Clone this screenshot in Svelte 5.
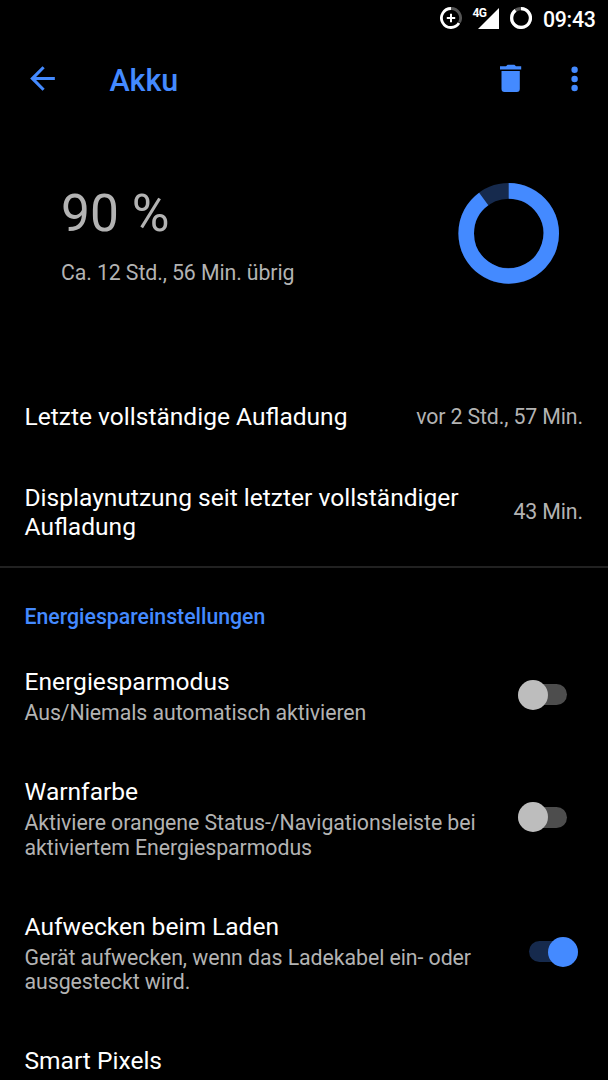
<script>
  const settings = [
    { title: 'Energiesparmodus', lines: ['Aus/Niemals automatisch aktivieren'], on: false },
    { title: 'Warnfarbe', lines: ['Aktiviere orangene Status-/Navigationsleiste bei', 'aktiviertem Energiesparmodus'], on: false },
    { title: 'Aufwecken beim Laden', lines: ['Gerät aufwecken, wenn das Ladekabel ein- oder', 'ausgesteckt wird.'], on: true }
  ];
</script>

<main>
  <div class="status">
    <svg width="22" height="22" viewBox="0 0 22 22" fill="none" stroke="#fff" stroke-width="2.8">
      <path d="M11 1.500A9.500 9.500 0 0 1 19.500 15.300" stroke="#555" />
      <path d="M11 1.500A9.500 9.500 0 1 0 19 16.100" />
      <path d="M11 6.800v8.400M6.800 11h8.400" stroke-width="2" />
    </svg>
    <svg class="signal" width="28" height="30" viewBox="0 -4 28 30">
      <path d="M27 1v21H6z" fill="#fff" />
      <text x="0.5" y="9.700" class="net">4G</text>
    </svg>
    <svg class="ring" width="22" height="22" viewBox="0 0 22 22" fill="none" stroke="#fff" stroke-width="3.2">
      <circle cx="11" cy="11" r="9.400" stroke="#555" /><path d="M11 1.600A9.400 9.400 0 1 1 5.500 3.400" />
    </svg>
    <time>09:43</time>
  </div>
  <header>
    <svg class="back" width="37" height="37" viewBox="0 0 24 24" fill="#448aff"><path d="M20 11H7.830l5.590-5.590L12 4l-8 8 8 8 1.410-1.410L7.830 13H20z" /></svg>
    <h1>Akku</h1>
    <svg class="trash" width="22" height="28" viewBox="0 0 22 28" fill="#448aff"><path d="M0 2.300h6L7.600.700h6.800L16 2.300h5.200v3.300H0zM1.500 7h18.300v18a3 3 0 0 1-3 3H4.500a3 3 0 0 1-3-3z" /></svg>
    <svg class="more" width="8" height="26" viewBox="0 0 8 26" fill="#448aff"><circle cx="3.600" cy="3.800" r="3.200" /><circle cx="3.600" cy="13" r="3.200" /><circle cx="3.600" cy="22" r="3.200" /></svg>
  </header>
  <section class="hero">
    <div><div class="percent">90 %</div><div class="remaining">Ca. 12 Std., 56 Min. übrig</div></div>
    <svg width="102" height="102" viewBox="0 0 102 102" fill="none" stroke-width="15.6">
      <circle cx="50.700" cy="51.400" r="42.500" stroke="#162a4d" /><path d="M50.700 8.900A42.500 42.500 0 1 1 25.720 17.020" stroke="#448aff" />
    </svg>
  </section>
  <section class="row charge"><span>Letzte vollständige Aufladung</span><small>vor 2 Std., 57 Min.</small></section>
  <section class="row usage"><span>Displaynutzung seit letzter vollständiger<br />Aufladung</span><small>43 Min.</small></section>
  <h2>Energiespareinstellungen</h2>
  {#each settings as s}
    <section class="setting">
      <div><h3>{s.title}</h3>{#each s.lines as line}<p>{line}</p>{/each}</div>
      <span class="switch" class:on={s.on}><i></i></span>
    </section>
  {/each}
  <h3 class="last">Smart Pixels</h3>
</main>

<style>
  :global(body) { background: #000; overflow: hidden; }
  main { width: 608px; height: 1080px; overflow: hidden; background: #000; color: #fff; font-family: Roboto, sans-serif; box-sizing: border-box; }
  h1, h2, h3, p { margin: 0; font-weight: 400; }
  svg { display: block; flex: none; }
  .status { height: 36px; display: flex; align-items: center; justify-content: flex-end; padding-right: 12px; }
  .signal { margin-left: 10px; }
  .ring { margin-left: 10px; }
  .net { font: 700 12px Roboto, sans-serif; letter-spacing: -.7px; fill: #fff; stroke: #000; stroke-width: 2px; paint-order: stroke; }
  time { width: 53px; font-size: 21.300px; line-height: 25px; font-weight: 500; margin: 2px 0 0 11px; letter-spacing: -.3px; white-space: nowrap; }
  header { height: 86px; display: flex; align-items: center; padding: 0 29px 0 23.500px; box-sizing: border-box; }
  .back { margin-top: -1px; }
  h1 { font-size: 30.500px; font-weight: 500; color: #448aff; margin: 2px 0 0 49px; flex: 1; letter-spacing: -.1px; }
  .trash { margin-top: -2px; }
  .more { margin-left: 49px; }
  .hero { height: 253px; display: flex; justify-content: space-between; padding: 60px 48px 0 61px; box-sizing: border-box; color: #b3b3b3; }
  .percent { font-size: 51.500px; line-height: 61px; padding-top: 1px; }
  .remaining { font-size: 21.300px; letter-spacing: -.1px; line-height: 25px; margin-top: 16px; }
  .row { display: flex; align-items: center; justify-content: space-between; padding: 0 25px 0 24.500px; box-sizing: border-box; font-size: 24.560px; line-height: 29px; }
  .row small { font-size: 21.300px; letter-spacing: -.12px; color: #b3b3b3; }
  .charge { height: 82px; }
  .usage { height: 111px; border-bottom: 2px solid #212121; }
  h2 { font-size: 21.250px; font-weight: 500; line-height: 25px; color: #448aff; padding: 36px 24.500px 0; }
  .setting { display: flex; align-items: center; justify-content: space-between; padding: 38px 25px 13.500px 24.500px; }
  h3 { font-size: 24.560px; line-height: 29px; }
  .setting h3 { margin-bottom: 5px; }
  p { font-size: 21.300px; letter-spacing: -.06px; line-height: 24.500px; color: #b3b3b3; }
  .switch { width: 49px; height: 21px; border-radius: 11px; background: #4d4d4d; margin: 0 16px 3px 0; position: relative; }
  .switch i { position: absolute; width: 30px; height: 30px; border-radius: 50%; background: #bdbdbd; top: -4.500px; left: 0; }
  .switch.on { background: #162a4d; margin-right: 5px; }
  .on i { background: #448aff; left: auto; right: 0; }
  .last { padding: 38px 24.500px 0; }
</style>
